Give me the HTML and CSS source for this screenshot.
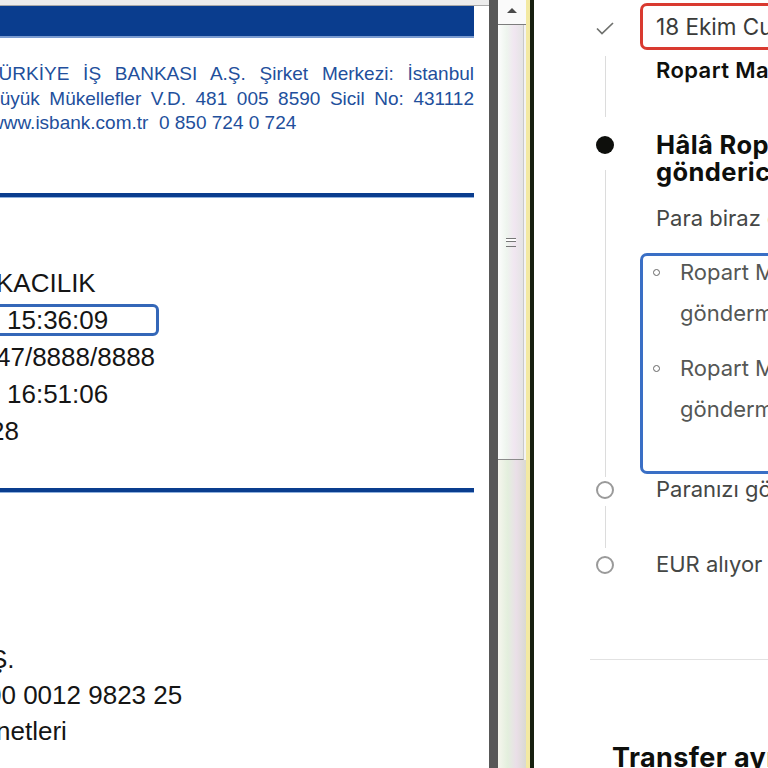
FILE: index.html
```html
<!DOCTYPE html>
<html lang="tr">
<head>
  <meta charset="UTF-8">
  <meta name="viewport" content="width=device-width, initial-scale=1.0">
  <title>Dekont ve transfer durumu</title>
  <link rel="stylesheet" href="styles.css">
</head>
<body>
  <div class="viewer">
    <div class="page">
      <div class="page-top"></div>
      <div class="doc-bar"></div>
      <div class="company">
        <div class="company-line full">TÜRKİYE İŞ BANKASI A.Ş. Şirket Merkezi: İstanbul</div>
        <div class="company-line full">Büyük Mükellefler V.D. 481 005 8590 Sicil No: 431112</div>
        <div class="company-line web">www.isbank.com.tr&nbsp; 0 850 724 0 724</div>
      </div>
      <div class="rule"></div>
      <div class="fields">
        <div class="field">KACILIK</div>
        <div class="field"><span class="hl">15:36:09</span></div>
        <div class="field">47/8888/8888</div>
        <div class="field pad">16:51:06</div>
        <div class="field cut">28</div>
      </div>
      <div class="rule"></div>
      <div class="fields lower">
        <div class="field cut">Ş.</div>
        <div class="field cut-more">00 0012 9823 25</div>
        <div class="field">netleri</div>
      </div>
    </div>
    <div class="scrollbar">
      <div class="scroll-up">
        <svg width="12" height="8" viewBox="0 0 12 8"><path d="M1 7 L6 2 L11 7" fill="#4a4a4a"/></svg>
      </div>
      <div class="scroll-thumb">
        <span class="grip"></span>
      </div>
      <div class="scroll-track"></div>
    </div>
    <div class="gutter"></div>
  </div>

  <div class="transfer">
    <div class="step">
      <div class="step-mark">
        <svg class="check" width="20" height="15" viewBox="0 0 20 15"><path d="M2 7.5 L7 12.5 L18 2" fill="none" stroke="#6f716e" stroke-width="1.7"/></svg>
        <div class="stem first"></div>
      </div>
      <div class="step-body">
        <div class="date-box">18 Ekim Cuma, 15:36</div>
        <div class="step-title small">Ropart Mağazacılık'tan paranız alındı</div>
      </div>
    </div>

    <div class="step current">
      <div class="step-mark">
        <span class="dot"></span>
        <div class="stem"></div>
      </div>
      <div class="step-body">
        <div class="step-title">Hâlâ Ropart Mağazacılık'ın<br>göndericisinden para bekliyoruz</div>
        <p class="step-text">Para biraz gecikebilir. Bunun nedeni şu olabilir:</p>
        <div class="note-box">
          <ul class="note-list">
            <li>Ropart Mağazacılık parayı henüz<br>göndermemiş olabilir</li>
            <li>Ropart Mağazacılık'ın bankası parayı<br>göndermekte gecikmiş olabilir</li>
          </ul>
        </div>
      </div>
    </div>

    <div class="step pending">
      <div class="step-mark">
        <span class="ring"></span>
        <div class="stem"></div>
      </div>
      <div class="step-body">
        <p class="step-text">Paranızı gönderiyoruz</p>
      </div>
    </div>

    <div class="step pending last">
      <div class="step-mark">
        <span class="ring"></span>
      </div>
      <div class="step-body">
        <p class="step-text">EUR alıyor olacaksınız</p>
      </div>
    </div>

    <div class="divider"></div>
    <h2 class="section-title">Transfer ayrıntıları</h2>
  </div>
</body>
</html>
```

FILE: styles.css
```css
body {
  margin: 0;
  display: flex;
  height: 768px;
  overflow: hidden;
  background-color: #ffffff;
}

/* left: pdf viewer */
.viewer {
  display: flex;
  flex-shrink: 0;
  width: 535px;
  height: 768px;
}
.page {
  width: 489px;
  overflow: hidden;
  background-color: #ffffff;
  font-family: "Liberation Sans", Arial, sans-serif;
}
.page-top {
  height: 5px;
  background-color: #ececec;
  border-bottom: 1px solid #a9a9a9;
}
.doc-bar {
  width: 474px;
  height: 30px;
  background-color: #0a3d8e;
  border-bottom: 2px solid #7a9bd0;
}
.company {
  width: 487px;
  margin: 24px 0 0 -13px;
  font-size: 19px;
  line-height: 24.5px;
  color: #224f9c;
  white-space: nowrap;
}
.company-line.full {
  text-align: justify;
  text-align-last: justify;
}
.company-line.web {
  padding-left: 3px;
}
.rule {
  width: 474px;
  height: 4px;
  margin-top: 57px;
  background-color: #0a3d8e;
  box-shadow: 0 1px 0 #8fb0dd;
}
.fields {
  margin: 68px 0 0 -4px;
  font-size: 26px;
  line-height: 37px;
  color: #151515;
  white-space: nowrap;
}
.fields + .rule {
  margin-top: 38px;
}
.fields.lower {
  margin-top: 149px;
  line-height: 36px;
}
.field.pad {
  padding-left: 11px;
}
.field.cut {
  margin-left: -6px;
}
.field.cut-more {
  margin-left: -9px;
}
.hl {
  display: inline-block;
  width: 149px;
  height: 26px;
  margin: 2px 0 3px -6px;
  padding-left: 14px;
  line-height: 26px;
  border: 3px solid #3467b8;
  border-radius: 6px;
  vertical-align: top;
}

.scrollbar {
  display: flex;
  flex-direction: column;
  width: 28px;
  border-left: 9px solid #585858;
  box-shadow: inset 1px 0 0 #9a9a9a;
  background-color: #f3f3f3;
}
.scroll-up {
  display: flex;
  justify-content: center;
  height: 25px;
  padding-top: 6px;
  box-sizing: border-box;
  background-color: #fafafa;
  border-bottom: 1px solid #7d7d7d;
}
.scroll-thumb {
  display: flex;
  align-items: center;
  justify-content: center;
  height: 434px;
  margin-right: 2px;
  background: linear-gradient(90deg, #fdfdfd, #eef5ee 35%, #f1e6f1 65%, #e4e4e4);
  border-bottom: 1px solid #8b8b8b;
  border-right: 1px solid #c9c9c9;
}
.grip {
  width: 10px;
  height: 7px;
  border-top: 1px solid #777;
  border-bottom: 1px solid #777;
  background: linear-gradient(#fff 0 2px, #777 2px 3px, transparent 3px);
}
.scroll-track {
  flex: 1;
  background: linear-gradient(90deg, #f6f6ee, #e3efdd 35%, #eadfe8 65%, #d9d9d2);
}
.gutter {
  width: 4px;
  border-left: 4px solid #f3e9a2;
  background-color: #17200f;
}

/* right: transfer timeline */
.transfer {
  flex: 1;
  overflow: hidden;
  padding-left: 55px;
  font-family: Inter, "Noto Sans", sans-serif;
  color: #454745;
}
.step {
  display: flex;
  gap: 20px;
}
.step-mark {
  display: flex;
  flex-direction: column;
  align-items: center;
  flex-shrink: 0;
  width: 30px;
}
.stem {
  flex: 1;
  width: 1px;
  margin-top: 16px;
  background-color: #dcdcdc;
}
.stem.first {
  margin: 20px 0 14px;
}
.check {
  margin-top: 21px;
}
.step-body {
  flex-shrink: 0;
  width: 420px;
  white-space: nowrap;
}
.step:first-child .step-body {
  padding: 3px 0 49px;
}
.date-box {
  height: 41px;
  padding-left: 13px;
  line-height: 41px;
  font-size: 22.5px;
  color: #3a3b39;
  border: 3px solid #d93a30;
  border-radius: 7px;
}
.step-title {
  margin: 0;
  padding-left: 16px;
  font-size: 25.5px;
  font-weight: 700;
  line-height: 27px;
  letter-spacing: 0.4px;
  color: #0e0f0c;
}
.step-title.small {
  margin-top: 8px;
  font-size: 22px;
  font-weight: 600;
  line-height: 24px;
}
.dot {
  width: 18px;
  height: 18px;
  margin-top: 5px;
  border-radius: 50%;
  background-color: #0e0f0c;
}
.step-text {
  margin: 21px 0 0;
  padding-left: 16px;
  font-size: 22px;
  line-height: 24px;
}
.note-box {
  margin-top: 23px;
  padding-bottom: 41px;
  border: 3px solid #3a6fc5;
  border-radius: 7px;
}
.note-list {
  margin: -4px 0 0;
  padding: 0;
  list-style: none;
  font-size: 22px;
  line-height: 41px;
  color: #555755;
}
.note-list li {
  display: flex;
  align-items: flex-start;
}
.note-list li + li {
  margin-top: 14px;
}
.note-list li::before {
  content: "";
  flex-shrink: 0;
  width: 5px;
  height: 5px;
  margin: 17px 20px 0 10px;
  border: 1.6px solid #666;
  border-radius: 50%;
}
.step.current .step-body {
  padding-bottom: 3px;
}
.ring {
  width: 14px;
  height: 14px;
  margin-top: 4px;
  border: 2px solid #9a9a9a;
  border-radius: 50%;
}
.step.pending .stem {
  margin: 7px 0 4px;
}
.step.pending .step-text {
  margin-top: 0;
  padding-bottom: 51px;
}
.step.pending.last .step-text {
  padding-bottom: 0;
}
.divider {
  margin-top: 83px;
  height: 1px;
  background-color: #e2e2e2;
}
.section-title {
  margin: 82px 0 0 22px;
  font-size: 27px;
  font-weight: 700;
  line-height: 32px;
  letter-spacing: 0.4px;
  color: #0e0f0c;
  white-space: nowrap;
}
```
